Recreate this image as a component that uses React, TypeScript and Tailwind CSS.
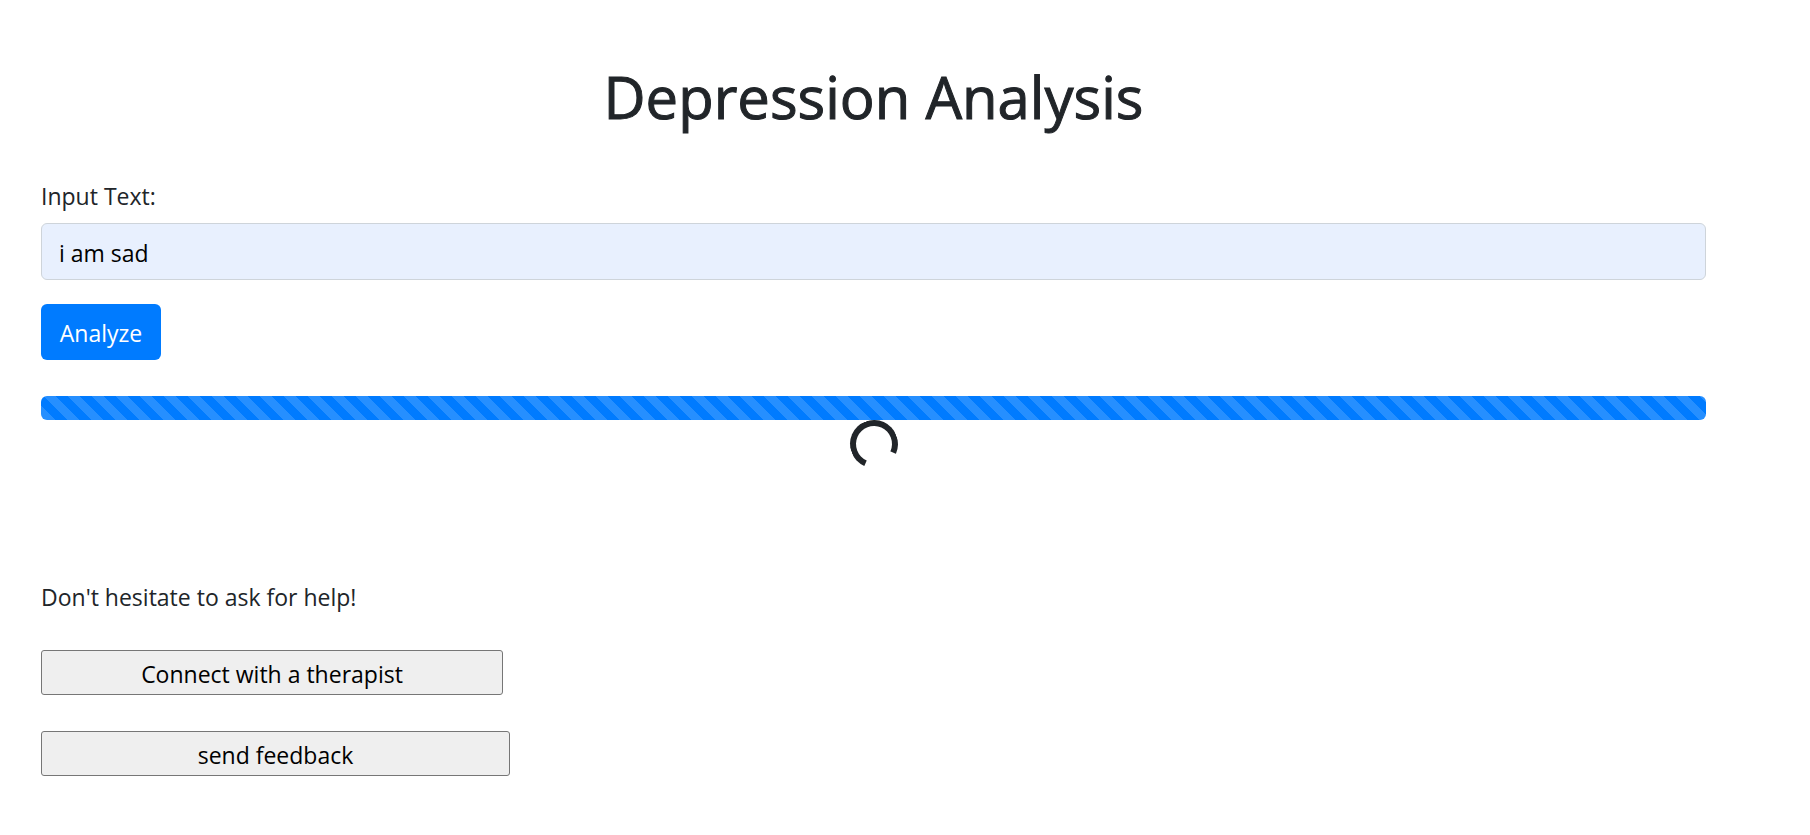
export default function App() {
  return (
    <main className="min-h-screen bg-white pt-[61px] pr-[104px] pl-[41px] font-['Open_Sans','Noto_Sans',sans-serif] text-[23px] leading-9 text-[#212529]">
      <h1 className="text-center text-[58px] leading-[72px] font-medium [-webkit-text-stroke:1px_#212529]">Depression Analysis</h1>
      <form className="mt-[45px]" onSubmit={(e) => e.preventDefault()}>
        <label htmlFor="text" className="block">Input Text:</label>
        <input
          id="text"
          type="text"
          defaultValue="i am sad"
          className="mt-[9px] block h-[57px] w-full rounded-md border border-[#ced4da] bg-[#e8f0fe] px-[17px] pt-[2px] text-black outline-none"
        />
        <button type="submit" className="mt-6 block h-[56px] w-[120px] rounded-md bg-[#007bff] pt-[2px] text-white">
          Analyze
        </button>
      </form>
      <div
        role="progressbar"
        aria-label="Analysis progress"
        className="mt-9 h-6 overflow-hidden rounded-md bg-[#007bff] bg-[linear-gradient(45deg,rgba(255,255,255,0.15)_25%,transparent_25%,transparent_50%,rgba(255,255,255,0.15)_50%,rgba(255,255,255,0.15)_75%,transparent_75%,transparent)] bg-[length:24px_24px] bg-[position:3px_0px]"
      />
      <div className="flex justify-center">
        <div role="status" aria-label="Loading" className="size-12 rotate-[69deg] rounded-full border-6 border-[#212529] border-r-transparent" />
      </div>
      <p className="mt-[111px]">Don't hesitate to ask for help!</p>
      <div className="mt-[35px] flex flex-col items-start gap-9">
        <button type="button" className="h-[45px] w-[462px] rounded-[3px] border border-[#767676] bg-[#efefef] pt-[2px] text-black">
          Connect with a therapist
        </button>
        <button type="button" className="h-[45px] w-[469px] rounded-[3px] border border-[#767676] bg-[#efefef] pt-[2px] text-black">
          send feedback
        </button>
      </div>
    </main>
  );
}
